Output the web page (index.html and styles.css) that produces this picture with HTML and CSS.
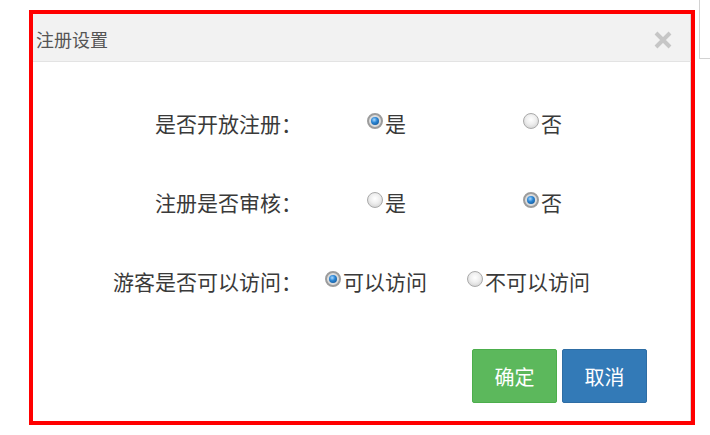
FILE: index.html
```html
<!DOCTYPE html>
<html lang="zh-CN">
<head>
    <meta charset="UTF-8">
    <meta name="viewport" content="width=device-width, initial-scale=1.0">
    <title>注册设置</title>
    <link rel="stylesheet" href="styles.css">
</head>
<body>
    <div class="edge-mark"></div>

    <div class="dialog">
        <div class="dialog-head">
            <span class="dialog-title">注册设置</span>
            <button class="close" aria-label="关闭">
                <svg width="20" height="20" viewBox="0 0 20 20">
                    <path d="M3 3 L17 17 M17 3 L3 17" stroke="#c6c6c6" stroke-width="4" stroke-linecap="butt"/>
                </svg>
            </button>
        </div>

        <div class="dialog-body">
            <div class="form-row">
                <span class="row-label">是否开放注册：</span>
                <label class="opt opt-first"><input type="radio" name="openReg" checked>是</label>
                <label class="opt opt-second"><input type="radio" name="openReg">否</label>
            </div>
            <div class="form-row">
                <span class="row-label">注册是否审核：</span>
                <label class="opt opt-first"><input type="radio" name="audit">是</label>
                <label class="opt opt-second"><input type="radio" name="audit" checked>否</label>
            </div>
            <div class="form-row form-row-wide">
                <span class="row-label">游客是否可以访问：</span>
                <label class="opt opt-first"><input type="radio" name="guest" checked>可以访问</label>
                <label class="opt opt-second"><input type="radio" name="guest">不可以访问</label>
            </div>
        </div>

        <div class="dialog-foot">
            <button class="btn btn-ok">确定</button>
            <button class="btn btn-cancel">取消</button>
        </div>
    </div>
</body>
</html>
```

FILE: styles.css
```css
:root {
    --mark-red: #ff0000;
    --head-bg: #f2f2f2;
    --head-line: #e3e3e3;
    --text-color: #3a3a3a;
    --title-color: #555;
    --ok-color: #5cb85c;
    --cancel-color: #337ab7;
}

body {
    margin: 0;
    padding: 10px 0 0 29px;
    background: #fff;
    font-family: "Noto Sans CJK SC", "Noto Sans", sans-serif;
    color: var(--text-color);
}

.edge-mark {
    position: absolute;
    top: 0;
    left: 699px;
    width: 12px;
    height: 58px;
    border-left: 1px solid #d2d2d2;
    border-bottom: 1px solid #d2d2d2;
}

.dialog {
    box-sizing: border-box;
    width: 666px;
    height: 415px;
    border: 4px solid var(--mark-red);
    display: flex;
    flex-direction: column;
}

.dialog-head {
    box-sizing: border-box;
    height: 48px;
    background: var(--head-bg);
    border-bottom: 1px solid var(--head-line);
    border-right: 1px solid #d6d6d6;
    display: flex;
    align-items: center;
    justify-content: space-between;
    padding: 0 17px 0 3px;
}

.dialog-title {
    font-size: 18px;
    color: var(--title-color);
    line-height: 1;
    margin-top: 2px;
}

.close {
    border: none;
    background: none;
    padding: 0;
    width: 20px;
    height: 20px;
    margin-top: 4px;
    cursor: pointer;
}

.close svg {
    display: block;
}

.dialog-body {
    flex: 1;
    padding-top: 46px;
    display: flex;
    flex-direction: column;
    gap: 49px;
    border-right: 1px solid #d6d6d6;
}

.form-row {
    display: flex;
    align-items: center;
    height: 30px;
    font-size: 21px;
}

.row-label {
    width: 269px;
    text-align: right;
    line-height: 1;
}

.opt {
    display: flex;
    align-items: center;
    line-height: 1;
    cursor: pointer;
}

.opt-first {
    margin-left: 65px;
}

.opt-second {
    margin-left: 117px;
}

.form-row-wide .opt-first {
    margin-left: 23px;
}

.form-row-wide .opt-second {
    margin-left: 40px;
}

.opt input {
    appearance: none;
    -webkit-appearance: none;
    box-sizing: border-box;
    flex: 0 0 16px;
    width: 16px;
    height: 16px;
    margin: 0 2px 0 0;
    border-radius: 50%;
    border: 1px solid #aaa;
    background: radial-gradient(circle at 50% 40%, #ffffff 0%, #eeeeee 45%, #c8c8c8 100%);
    position: relative;
    top: -2px;
}

.opt input:checked {
    border: 2px solid #9c9c9c;
    background: #dcdcdc;
}

.opt input:checked::after {
    content: "";
    position: absolute;
    left: 2px;
    top: 2px;
    width: 8px;
    height: 8px;
    border-radius: 50%;
    background: radial-gradient(circle at 40% 35%, #a8d8ff 0%, #2c86d4 40%, #0a4a88 100%);
}

.dialog-foot {
    display: flex;
    justify-content: flex-end;
    gap: 5px;
    padding: 0 43px 18px 0;
    border-right: 1px solid #d6d6d6;
}

.btn {
    width: 85px;
    height: 54px;
    border: 1px solid transparent;
    border-radius: 2px;
    color: #fff;
    font-family: "Noto Sans CJK SC", "Noto Sans", sans-serif;
    font-size: 20px;
    cursor: pointer;
    padding: 0;
}

.btn-ok {
    background: var(--ok-color);
    border-color: #4cae4c;
}

.btn-cancel {
    background: var(--cancel-color);
    border-color: #2e6da4;
}
```
